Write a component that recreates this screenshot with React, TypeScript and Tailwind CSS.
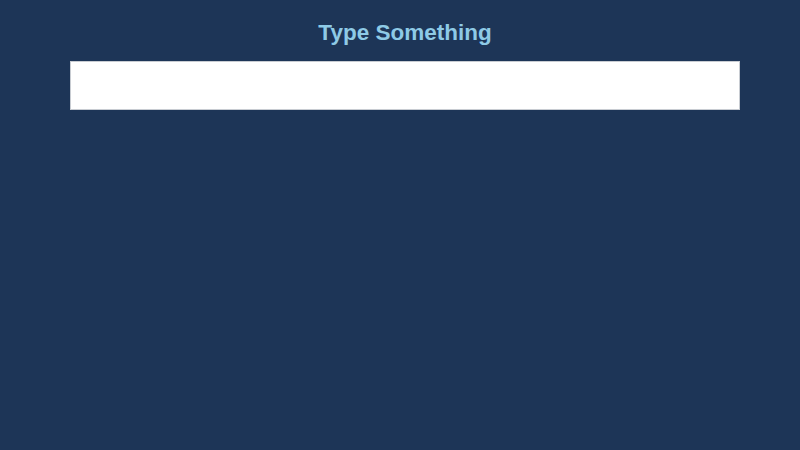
export default function App() {
  return (
    <div className="min-h-screen w-full bg-[#1d3557] pl-[70px] pr-[60px] pt-[19px] font-['Liberation_Sans',Arial,sans-serif]">
      <h1 className="text-center text-[22.5px] leading-[28px] font-bold text-[#8ecae6]">Type Something</h1>
      <input
        type="text"
        className="mt-[14px] block h-[49px] w-full bg-white border border-[#c8ccd2] px-3 text-[16px] outline-none"
      />
    </div>
  );
}
